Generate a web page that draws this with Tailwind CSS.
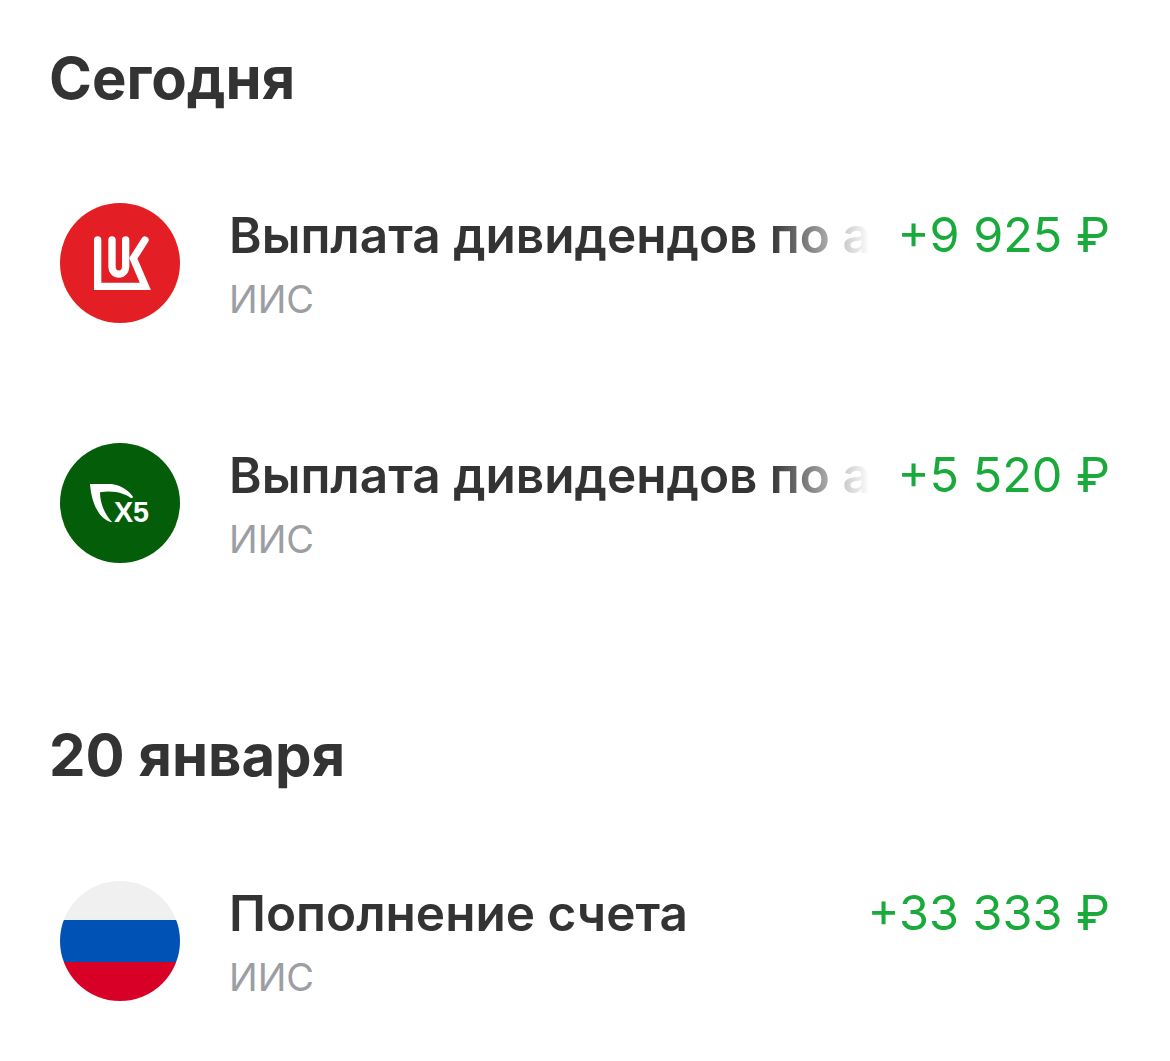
<!DOCTYPE html>
<html lang="ru">
<head>
<meta charset="UTF-8">
<title>Операции</title>
<script src="https://cdn.jsdelivr.net/npm/@tailwindcss/browser@4"></script>
</head>
<body class="bg-white font-['Inter',sans-serif] text-[#333333]">
<div class="w-[1170px] h-[1061px] overflow-hidden pl-[49px] pr-[60px] pt-[44px]">

  <h2 class="text-[58px] leading-[68px] font-bold">Сегодня</h2>

  <div class="mt-[91px] flex items-center h-[120px] pl-[11px]">
    <svg class="w-[120px] h-[120px] shrink-0" viewBox="0 0 120 120">
      <circle cx="60" cy="60" r="60" fill="#e31e24"/>
      <g transform="translate(-10 -8) scale(.3333)" fill="none" stroke="#fff" stroke-width="22" stroke-linecap="round" stroke-linejoin="miter">
        <path d="M143 135V274H286L250 190L285 135"/>
        <path d="M186 135V212C186 246 227 246 227 212V135"/>
      </g>
    </svg>
    <div class="ml-[49px] flex-1 min-w-0 pt-[2px]">
      <div class="flex justify-between items-start">
        <div class="w-[641px] overflow-hidden whitespace-nowrap text-[49.5px] leading-[58px] font-semibold [mask-image:linear-gradient(to_right,#000_541px,transparent_641px)]">Выплата дивидендов по а</div>
        <div class="text-[48.5px] leading-[58px] text-[#1aaa3c]">+9 925 ₽</div>
      </div>
      <div class="mt-[12px] text-[38px] leading-[46px] text-[#9b9ea3]">ИИС</div>
    </div>
  </div>

  <div class="mt-[120px] flex items-center h-[120px] pl-[11px]">
    <svg class="w-[120px] h-[120px] shrink-0" viewBox="0 0 120 120">
      <circle cx="60" cy="60" r="60" fill="#045d08"/>
      <g transform="translate(-10 -8) scale(.3333)" fill="#fff">
        <path d="M120 147H185C215 150 240 170 250 187L243 190C225 175 190 165 150 172C150 205 165 240 187 262C150 255 125 210 120 147Z"/>
        <text x="192" y="262" font-size="86" font-weight="700" font-family="Liberation Sans, sans-serif">X5</text>
      </g>
    </svg>
    <div class="ml-[49px] flex-1 min-w-0 pt-[2px]">
      <div class="flex justify-between items-start">
        <div class="w-[641px] overflow-hidden whitespace-nowrap text-[49.5px] leading-[58px] font-semibold [mask-image:linear-gradient(to_right,#000_541px,transparent_641px)]">Выплата дивидендов по а</div>
        <div class="text-[48.5px] leading-[58px] text-[#1aaa3c]">+5 520 ₽</div>
      </div>
      <div class="mt-[12px] text-[38px] leading-[46px] text-[#9b9ea3]">ИИС</div>
    </div>
  </div>

  <h2 class="mt-[158px] text-[58px] leading-[68px] font-bold">20 января</h2>

  <div class="mt-[92px] flex items-center h-[120px] pl-[11px]">
    <svg class="w-[120px] h-[120px] shrink-0" viewBox="0 0 120 120">
      <clipPath id="flag"><circle cx="60" cy="60" r="60"/></clipPath>
      <g clip-path="url(#flag)">
        <rect width="120" height="39" fill="#f0f0f0"/>
        <rect y="39" width="120" height="42" fill="#0052b4"/>
        <rect y="81" width="120" height="39" fill="#d80027"/>
      </g>
    </svg>
    <div class="ml-[49px] flex-1 min-w-0 pt-[2px]">
      <div class="flex justify-between items-start">
        <div class="whitespace-nowrap text-[49.5px] leading-[58px] font-semibold">Пополнение счета</div>
        <div class="text-[48.5px] leading-[58px] text-[#1aaa3c]">+33 333 ₽</div>
      </div>
      <div class="mt-[12px] text-[38px] leading-[46px] text-[#9b9ea3]">ИИС</div>
    </div>
  </div>

</div>
</body>
</html>
